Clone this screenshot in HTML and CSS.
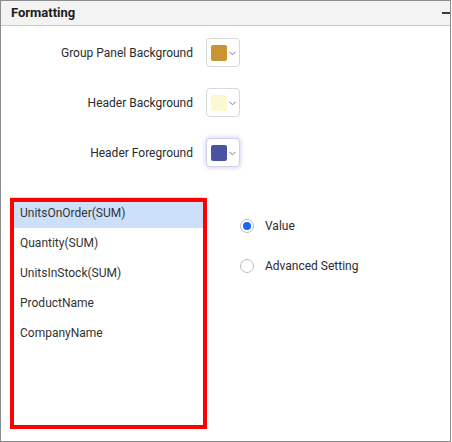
FILE: index.html
```html
<!DOCTYPE html>
<html>
<head>
<meta charset="utf-8">
<link rel="stylesheet" href="styles.css">
</head>
<body>
<div class="frame">
  <div class="header">
    <span class="title">Formatting</span>
    <span class="minus"></span>
  </div>
  <div class="content">
    <div class="pickers">
      <div class="label">Group Panel Background</div>
      <div class="picker"><span class="swatch gold"></span><svg class="chev" width="7" height="5" viewBox="0 0 7 5"><path d="M0.5 0.8 L3.5 3.8 L6.5 0.8" fill="none" stroke="#6a7895" stroke-width="1"/></svg></div>
      <div class="label">Header Background</div>
      <div class="picker"><span class="swatch cream"></span><svg class="chev" width="7" height="5" viewBox="0 0 7 5"><path d="M0.5 0.8 L3.5 3.8 L6.5 0.8" fill="none" stroke="#6a7895" stroke-width="1"/></svg></div>
      <div class="label">Header Foreground</div>
      <div class="picker focused"><span class="swatch blue"></span><svg class="chev" width="7" height="5" viewBox="0 0 7 5"><path d="M0.5 0.8 L3.5 3.8 L6.5 0.8" fill="none" stroke="#6a7895" stroke-width="1"/></svg></div>
    </div>
    <div class="lower">
      <div class="listwrap">
        <ul class="list">
          <li class="item selected">UnitsOnOrder(SUM)</li>
          <li class="item">Quantity(SUM)</li>
          <li class="item">UnitsInStock(SUM)</li>
          <li class="item">ProductName</li>
          <li class="item">CompanyName</li>
        </ul>
        <div class="highlight"></div>
      </div>
      <div class="radios">
        <div class="radio"><span class="circle checked"></span><span class="rlabel">Value</span></div>
        <div class="radio"><span class="circle"></span><span class="rlabel">Advanced Setting</span></div>
      </div>
    </div>
  </div>
</div>
</body>
</html>
```
FILE: styles.css
```css
* { box-sizing: border-box; }
html, body { margin: 0; padding: 0; background: #fff; }
body { font-family: Roboto, "Liberation Sans", sans-serif; }

.frame {
  width: 451px;
  height: 442px;
  border: 1px solid #8c8c8c;
  overflow: hidden;
}

.header {
  height: 25px;
  background: #f3f3f3;
  border-bottom: 1px solid #cccccc;
  display: flex;
  align-items: center;
  justify-content: space-between;
  padding-left: 10px;
}
.title {
  font-size: 13px;
  font-weight: bold;
  color: #1c1c1c;
  margin-top: -1px;
}
.minus {
  width: 8px;
  height: 2px;
  background: #3a3a3a;
}

.content { padding-top: 12px; }

.pickers {
  display: grid;
  grid-template-columns: 192px 34px;
  column-gap: 13px;
  row-gap: 21px;
  align-items: center;
}
.label {
  text-align: right;
  font-size: 12px;
  color: #2b2b2b;
}
.picker {
  width: 34px;
  height: 29px;
  border: 1px solid #d8d8d8;
  border-radius: 4px;
  display: flex;
  align-items: center;
  padding-left: 4px;
  background: #fff;
}
.picker.focused {
  box-shadow: 0 0 4px 1px rgba(120, 100, 200, 0.28);
  border-color: #d4d0ea;
}
.swatch {
  width: 16px;
  height: 16px;
  border-radius: 2px;
}
.gold { background: #c99432; }
.cream { background: #fcf8cf; }
.blue { background: #4953a3; }
.chev { margin-left: 2px; margin-top: 1px; }

.lower {
  display: flex;
  margin-top: 30px;
}
.listwrap {
  position: relative;
  margin-left: 9px;
  width: 194px;
  height: 232px;
}
.list {
  list-style: none;
  margin: 0;
  padding: 0;
  height: 100%;
  border: 1px solid #dcdcdc;
}
.item {
  height: 30px;
  line-height: 30px;
  padding-left: 9px;
  font-size: 12px;
  color: #333;
}
.item.selected { background: #cce0fc; }
.highlight {
  position: absolute;
  left: 0;
  top: 1px;
  width: 197px;
  height: 231px;
  border: 4px solid #ff0000;
}

.radios {
  margin-left: 36px;
  padding-top: 19px;
  display: flex;
  flex-direction: column;
  gap: 20px;
}
.radio {
  height: 20px;
  display: flex;
  align-items: center;
}
.circle {
  width: 14px;
  height: 14px;
  border: 1px solid #bdbdbd;
  border-radius: 50%;
  display: flex;
  align-items: center;
  justify-content: center;
  background: #fff;
}
.circle.checked::after {
  content: "";
  width: 8px;
  height: 8px;
  border-radius: 50%;
  background: #1a66f2;
}
.rlabel {
  margin-left: 11px;
  font-size: 12px;
  color: #2b2b2b;
}
```
